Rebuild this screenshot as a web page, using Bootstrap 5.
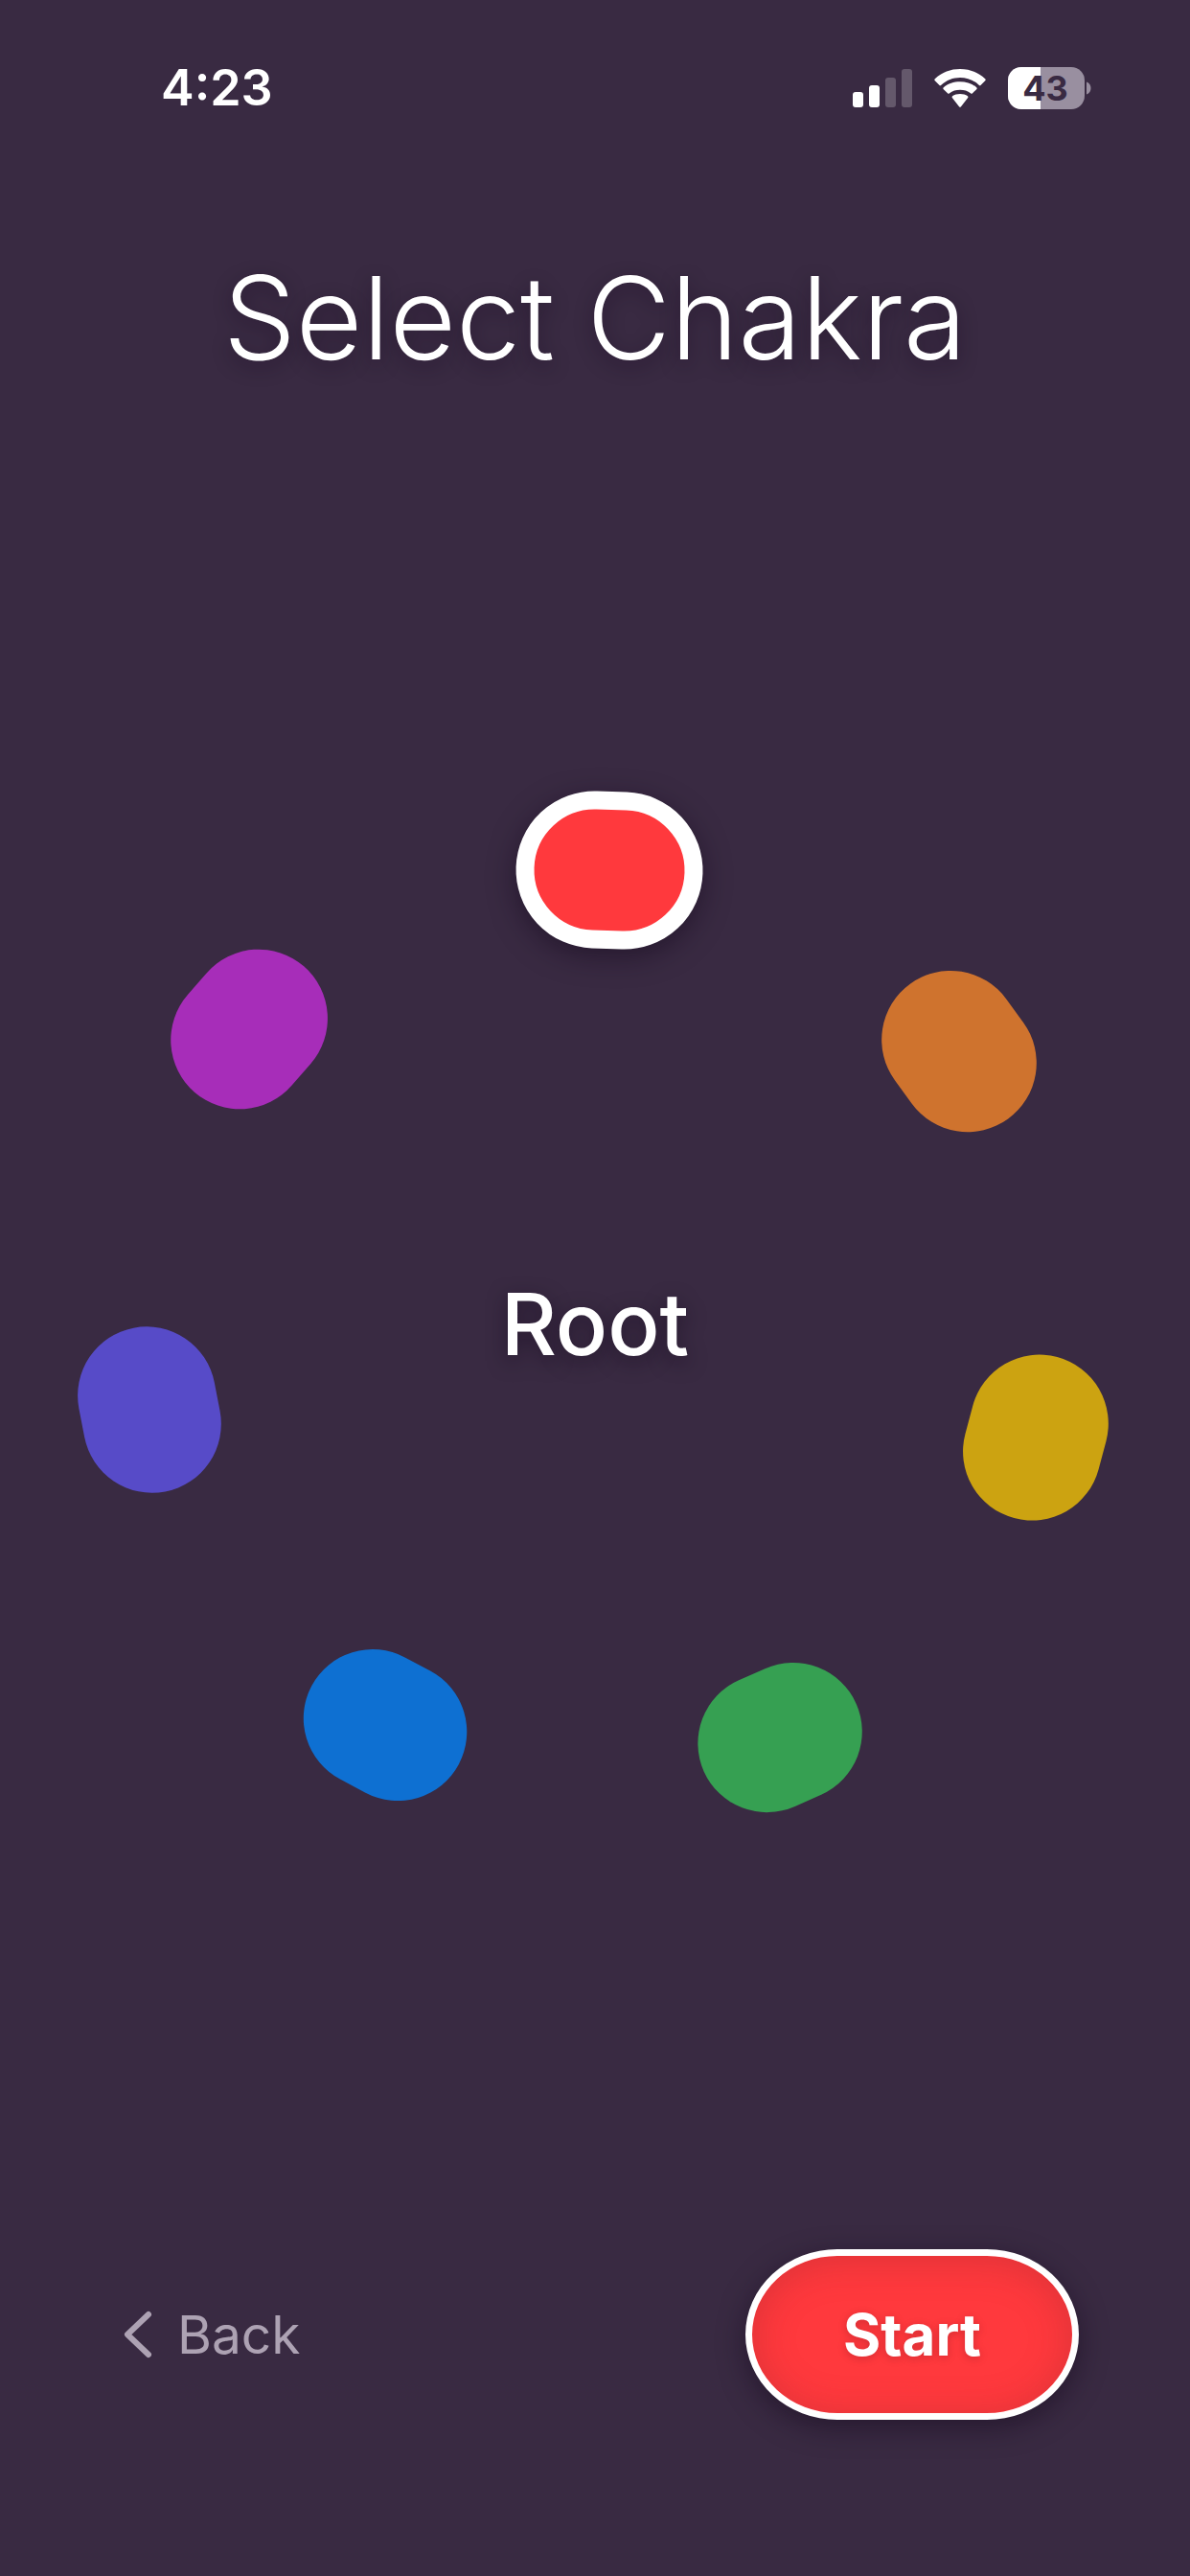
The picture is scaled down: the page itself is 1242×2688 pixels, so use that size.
<!DOCTYPE html>
<html lang="en">
<head>
<meta charset="utf-8">
<meta name="viewport" content="width=device-width, initial-scale=1">
<title>Select Chakra</title>
<link href="https://cdn.jsdelivr.net/npm/bootstrap@5.3.0/dist/css/bootstrap.min.css" rel="stylesheet">
<style>
  body { background: #392a42; color: #fff; font-family: Inter, Roboto, sans-serif; }
  .status-bar { height: 184px; padding: 0 102px 0 168px; }
  .clock { font-size: 52px; line-height: 64px; font-weight: 600; }
  .status-icons { gap: 23px; }
  .battery-text { font: 700 36px Inter, sans-serif; fill: #392a42; }
  .screen-title { font-size: 120px; line-height: 160px; font-weight: 300; margin-top: 68px; text-shadow: 0 6px 20px rgba(20, 8, 28, .4); }
  /* Ring of chakras: each orb is placed by its centre */
  .ring-area { padding-bottom: 40px; }
  .ring { width: 100%; aspect-ratio: 1242 / 1080; }
  .orb {
    position: absolute; width: 14%; aspect-ratio: 174 / 144; margin: 0;
    appearance: none; border-radius: 50rem; cursor: pointer;
    background: var(--tone); transform: translate(-50%, -50%) rotate(var(--turn));
  }
  .orb:checked { width: 15.7%; aspect-ratio: 195 / 164; border: 19px solid #fff; box-shadow: 0 8px 28px rgba(20, 8, 28, .5); }
  .orb-root   { --tone: #ff393d; --turn: 2deg;   left: 51.2%; top: 8.15%; }
  .orb-sacral { --tone: #cf732e; --turn: 54deg;  left: 80.6%; top: 25.7%; }
  .orb-solar  { --tone: #cca311; --turn: 105deg; left: 87%;   top: 63.05%; }
  .orb-heart  { --tone: #36a052; --turn: -24deg; left: 65.5%; top: 92%; }
  .orb-throat { --tone: #0e70d2; --turn: 28deg;  left: 32.4%; top: 90.8%; }
  .orb-eye    { --tone: #574bc8; --turn: 79deg;  left: 12.6%; top: 60.35%; }
  .orb-crown  { --tone: #a72db9; --turn: -49deg; left: 20.9%; top: 23.6%; }
  .chosen { font-size: 90px; line-height: 112px; font-weight: 500; padding-top: 44px; text-shadow: 0 6px 20px rgba(20, 8, 28, .5); }
  .actions { padding: 0 116px 163px 128px; }
  .btn-back { color: #ada2b3; font-size: 55px; line-height: 72px; gap: 25px; }
  .btn-begin {
    width: 348px; height: 178px; border: 7px solid #fff; border-radius: 96px / 50%;
    background: #ff393d; color: #fff; font-size: 60px; line-height: 72px; font-weight: 700;
    box-shadow: 0 8px 28px rgba(20, 8, 28, .5), inset 0 4px 40px rgba(110, 30, 40, .25);
    text-shadow: 0 2px 8px rgba(110, 20, 30, .3);
  }
</style>
</head>
<body class="d-flex flex-column min-vh-100 overflow-x-hidden">
<header class="status-bar d-flex align-items-center justify-content-between">
  <time class="clock">4:23</time>
  <div class="status-icons d-flex align-items-center">
    <svg width="62" height="44" viewBox="0 0 62 44" fill="#fff" role="img" aria-label="Signal: 2 of 4 bars">
      <rect x="0" y="26" width="11" height="16" rx="3"/>
      <rect x="17" y="19" width="11" height="23" rx="3"/>
      <rect x="34" y="11" width="11" height="31" rx="3" opacity=".22"/>
      <rect x="51" y="2" width="11" height="40" rx="3" opacity=".22"/>
    </svg>
    <svg width="54" height="44" viewBox="0 0 54 44" fill="#fff" role="img" aria-label="Wi-Fi">
      <path d="M.8 14.2Q-.2 13.200.8 12.200C8.200 5.300 17.300 2 27 2s18.800 3.300 26.200 10.200q1 1 0 2L48.700 18.700q-1 1-2 0C41.200 13.700 34.300 11 27 11S12.800 13.700 7.300 18.700q-1 1-2 0Z"/>
      <path d="M9.800 23.200q-1-1 0-2C14.500 17 20.500 15.200 27 15.200s12.500 1.800 17.200 6q1 1 0 2L40 27.300q-1 1-2 0C35 24.800 31.200 23.800 27 23.800s-8 1-11 3.500q-1 1-2 0Z"/>
      <path d="M19 32.300q-1-1 0-2C21 28.700 24 28 27 28s6 .7 8 2.300q1 1 0 2L28 41.300q-1 1-2 0Z"/>
    </svg>
    <svg width="88" height="44" viewBox="0 0 88 44" role="img" aria-label="Battery 43%">
      <defs><clipPath id="cell"><rect width="80" height="44" rx="14"/></clipPath></defs>
      <g clip-path="url(#cell)"><rect width="80" height="44" fill="#998fa0"/><rect width="34" height="44" fill="#fff"/></g>
      <path d="M82 15.500C88 17.500 88 26.500 82 28.500Z" fill="#998fa0"/>
      <text class="battery-text" x="39" y="35" text-anchor="middle">43</text>
    </svg>
  </div>
</header>
<main class="d-flex flex-column flex-grow-1">
  <h1 class="screen-title text-center mb-0">Select Chakra</h1>
  <div class="ring-area flex-grow-1 d-flex align-items-center">
    <div class="ring position-relative d-flex align-items-center justify-content-center" role="radiogroup" aria-label="Chakra">
      <input type="radio" name="chakra" class="orb orb-root" aria-label="Root" checked>
      <input type="radio" name="chakra" class="orb orb-sacral" aria-label="Sacral">
      <input type="radio" name="chakra" class="orb orb-solar" aria-label="Solar plexus">
      <input type="radio" name="chakra" class="orb orb-heart" aria-label="Heart">
      <input type="radio" name="chakra" class="orb orb-throat" aria-label="Throat">
      <input type="radio" name="chakra" class="orb orb-eye" aria-label="Third eye">
      <input type="radio" name="chakra" class="orb orb-crown" aria-label="Crown">
      <output class="chosen">Root</output>
    </div>
  </div>
</main>
<footer class="actions d-flex align-items-center justify-content-between">
  <button type="button" class="btn btn-back d-flex align-items-center border-0 p-0">
    <svg width="32" height="52" viewBox="0 0 32 52" fill="none" stroke="currentColor" stroke-width="6" stroke-linecap="round" stroke-linejoin="round" aria-hidden="true"><path d="M27 5 5 26l22 21"/></svg>
    Back
  </button>
  <button type="button" class="btn btn-begin p-0">Start</button>
</footer>
<script src="https://cdn.jsdelivr.net/npm/bootstrap@5.3.0/dist/js/bootstrap.bundle.min.js"></script>
</body>
</html>
